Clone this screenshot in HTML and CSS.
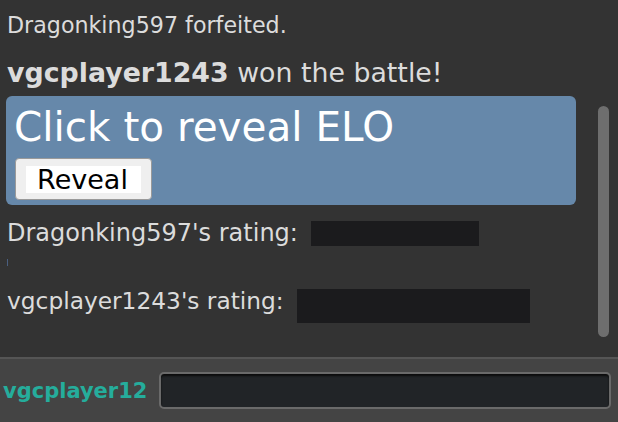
FILE: index.html
```html
<!DOCTYPE html>
<html>
<head>
<meta charset="utf-8">
<link rel="stylesheet" href="styles.css">
</head>
<body>
<div class="app">
  <div class="log-wrap">
    <div class="log">
      <div class="line first">Dragonking597 forfeited.</div>
      <div class="line win"><strong>vgcplayer1243</strong> won the battle!</div>
      <div class="reveal-box">
        <div class="reveal-title">Click to reveal ELO</div>
        <button class="reveal-btn"><span class="btn-face">Reveal</span></button>
      </div>
      <div class="line rating r1"><span>Dragonking597's rating:</span><span class="hidden-val v1"></span></div>
      <div class="tick"></div>
      <div class="line rating r2"><span>vgcplayer1243's rating:</span><span class="hidden-val v2"></span></div>
    </div>
    <div class="track"><div class="thumb"></div></div>
  </div>
  <div class="chatbar">
    <span class="me">vgcplayer12</span>
    <div class="input"></div>
  </div>
</div>
</body>
</html>
```
FILE: styles.css
```css
html, body {
  margin: 0;
  padding: 0;
  background: #333333;
}
body {
  font-family: "DejaVu Sans", Verdana, sans-serif;
  color: #dcdcdc;
  width: 618px;
  height: 422px;
  overflow: hidden;
}
.app {
  display: flex;
  flex-direction: column;
  height: 422px;
}
.log-wrap {
  display: flex;
  height: 357px;
  border-bottom: 2px solid #555555;
}
.log {
  flex: 1;
  padding: 0 0 0 6px;
}
.line {
  padding-left: 1px;
}
.first {
  font-size: 22.2px;
  line-height: 26px;
  margin-top: 12px;
}
.win {
  font-size: 26.8px;
  line-height: 30px;
  margin-top: 20px;
}
.win strong {
  font-weight: bold;
}
.reveal-box {
  margin-top: 8px;
  width: 570px;
  height: 109px;
  box-sizing: border-box;
  background: #6688aa;
  border-radius: 6px;
  padding: 8px 0 0 8px;
}
.reveal-title {
  color: #ffffff;
  font-size: 40.5px;
  line-height: 46px;
}
.reveal-btn {
  margin-top: 8px;
  width: 137px;
  height: 42px;
  padding: 0;
  border: 1px solid #9a9a9a;
  border-radius: 4px;
  background: #efefef;
  display: flex;
  align-items: center;
  justify-content: center;
  margin-left: 1px;
}
.btn-face {
  background: #ffffff;
  color: #000000;
  font-family: "DejaVu Sans", Verdana, sans-serif;
  font-size: 27px;
  line-height: 27px;
  width: 115px;
  padding-right: 2px;
  box-sizing: border-box;
  text-align: center;
}
.rating {
  display: flex;
  line-height: 28px;
}
.r1 {
  font-size: 24px;
  align-items: center;
  margin-top: 14px;
}
.hidden-val {
  display: inline-block;
  background: #1b1b1d;
  margin-left: 13px;
}
.v1 {
  width: 168px;
  height: 25px;
}
.tick {
  width: 1px;
  height: 7px;
  margin: 12px 0 0 1px;
  background: #4a5f80;
}
.r2 {
  font-size: 23.3px;
  align-items: flex-start;
  margin-top: 21px;
}
.v2 {
  width: 233px;
  height: 34px;
  margin-top: 2px;
}
.track {
  width: 16px;
  padding-top: 106px;
  box-sizing: border-box;
  margin-right: 4px;
}
.thumb {
  width: 11px;
  height: 231px;
  border-radius: 6px;
  background: #6e6e6e;
}
.chatbar {
  flex: 1;
  background: #444444;
  display: flex;
  align-items: center;
  padding: 0 7px 0 3px;
}
.me {
  color: #25ad9c;
  font-weight: bold;
  font-size: 21px;
  margin-right: 12px;
}
.input {
  flex: 1;
  height: 37px;
  box-sizing: border-box;
  background: #212427;
  border: 2px solid #6a6a6a;
  border-radius: 5px;
  box-shadow: inset 0 2px 2px #0c0c0c;
}
```
